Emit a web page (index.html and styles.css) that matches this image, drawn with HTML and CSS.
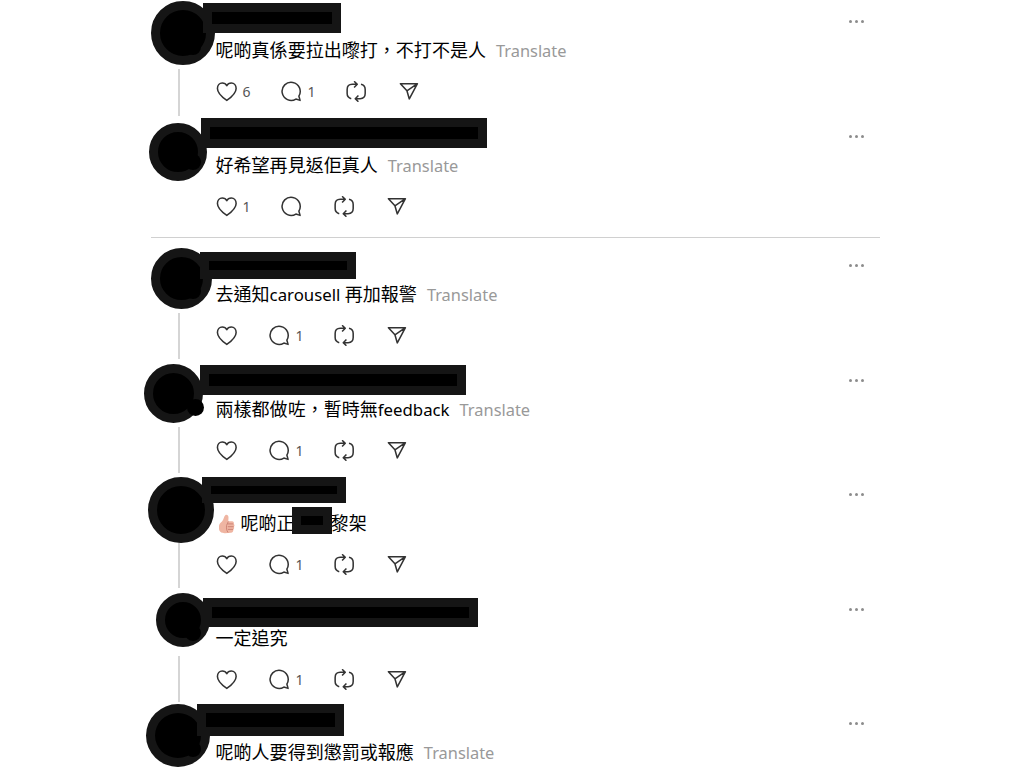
FILE: index.html
```html
<!DOCTYPE html>
<html lang="zh-HK">
<head>
  <meta charset="UTF-8">
  <meta name="viewport" content="width=device-width, initial-scale=1.0">
  <title>Thread</title>
  <link rel="stylesheet" href="styles.css">
</head>
<body>

  <!-- Shared icons -->
  <svg class="sprite" width="0" height="0">
    <symbol id="heart" viewBox="0 0 22 22">
      <path d="M11.300 20.300C8.800 18.500 1.500 13.500 1.500 7.800C1.500 4.300 3.800 2 6.500 2C8.900 2 10.600 3.500 11.300 5C12 3.500 13.700 2 16.100 2C18.800 2 21.100 4.300 21.100 7.800C21.100 13.500 13.800 18.500 11.300 20.300Z"/>
    </symbol>
    <symbol id="comment" viewBox="0 0 22 22">
      <path d="M18.700 15.800A9.500 9.500 0 1 0 15.600 18.900L20 20.300Z"/>
    </symbol>
    <symbol id="repost" viewBox="0 0 22 22">
      <path d="M5.500 18.500C2.700 17.800 1.200 16.300 1.200 13.200V8.800C1.200 5.300 3 3.500 6.500 3.500H11.800M8.500 .3L11.800 3.500L8.500 6.900M15.700 3.500C18.600 4.200 20.100 5.700 20.100 8.800V13.200C20.100 16.700 18.300 18.500 14.800 18.500H9.800M13 15.100L9.700 18.500L13 21.700"/>
    </symbol>
    <symbol id="share" viewBox="0 0 22 22">
      <path d="M1.500 2.800H19.300L10.800 18.800L8.300 10.300ZM8.300 10.300L19.300 2.800"/>
    </symbol>
  </svg>

  <main class="thread">
    <article class="post post-1">
      <div class="rail"><span class="line"></span></div>
      <div class="content">
        <div class="head"><span class="more"><i></i><i></i><i></i></span></div>
        <p class="text">呢啲真係要拉出嚟打，不打不是人<a class="translate">Translate</a></p>
        <div class="actions">
          <span class="action"><svg><use href="#heart"/></svg><b>6</b></span>
          <span class="action"><svg><use href="#comment"/></svg><b>1</b></span>
          <span class="action"><svg><use href="#repost"/></svg></span>
          <span class="action"><svg><use href="#share"/></svg></span>
        </div>
      </div>
      <span class="avatar"></span>
      <span class="badge"></span>
      <span class="name"></span>
    </article>

    <article class="post post-2">
      <div class="rail"></div>
      <div class="content">
        <div class="head"><span class="more"><i></i><i></i><i></i></span></div>
        <p class="text">好希望再見返佢真人<a class="translate">Translate</a></p>
        <div class="actions">
          <span class="action"><svg><use href="#heart"/></svg><b>1</b></span>
          <span class="action"><svg><use href="#comment"/></svg></span>
          <span class="action"><svg><use href="#repost"/></svg></span>
          <span class="action"><svg><use href="#share"/></svg></span>
        </div>
      </div>
      <span class="avatar"></span>
      <span class="badge"></span>
      <span class="name"></span>
    </article>

    <hr class="divider">

    <article class="post post-3">
      <div class="rail"><span class="line"></span></div>
      <div class="content">
        <div class="head"><span class="more"><i></i><i></i><i></i></span></div>
        <p class="text">去通知<span class="latin">carousell </span>再加報警<a class="translate">Translate</a></p>
        <div class="actions">
          <span class="action"><svg><use href="#heart"/></svg></span>
          <span class="action"><svg><use href="#comment"/></svg><b>1</b></span>
          <span class="action"><svg><use href="#repost"/></svg></span>
          <span class="action"><svg><use href="#share"/></svg></span>
        </div>
      </div>
      <span class="avatar"></span>
      <span class="badge"></span>
      <span class="name"></span>
    </article>

    <article class="post post-4">
      <div class="rail"><span class="line"></span></div>
      <div class="content">
        <div class="head"><span class="more"><i></i><i></i><i></i></span></div>
        <p class="text">兩樣都做咗，暫時無<span class="latin">feedback</span><a class="translate">Translate</a></p>
        <div class="actions">
          <span class="action"><svg><use href="#heart"/></svg></span>
          <span class="action"><svg><use href="#comment"/></svg><b>1</b></span>
          <span class="action"><svg><use href="#repost"/></svg></span>
          <span class="action"><svg><use href="#share"/></svg></span>
        </div>
      </div>
      <span class="avatar"></span>
      <span class="badge"></span>
      <span class="name"></span>
    </article>

    <article class="post post-5">
      <div class="rail"><span class="line"></span></div>
      <div class="content">
        <div class="head"><span class="more"><i></i><i></i><i></i></span></div>
        <div class="text">
          <svg class="thumb" viewBox="0 0 20 20">
            <path fill="#efb5a2" d="M8.500 1C10.200 .4 11.500 1.600 11.500 3.500L11.300 7.300H15C16.800 7.300 17.300 9 16.600 9.900C17.800 10.500 17.700 12.200 16.800 12.700C17.500 13.600 17.200 15 16.300 15.400C16.600 17 15.600 18.500 14 18.700L8 19.200C4.500 19.300 2 17.500 2 14.500V12C2 10 3.500 9 5 7.500C7 5.500 6.700 2.500 8.500 1Z"/>
            <path fill="none" stroke="#c97f70" stroke-width=".9" d="M11.300 7.500L10.300 9.900H16.400M10.800 12.700H16.600M11 15.400H16.100M10.200 9.900C9 11 9.200 16.500 11 18.500"/>
          </svg>
          <span>呢啲正</span>
          <span class="cover"></span>
          <span>黎架</span>
        </div>
        <div class="actions">
          <span class="action"><svg><use href="#heart"/></svg></span>
          <span class="action"><svg><use href="#comment"/></svg><b>1</b></span>
          <span class="action"><svg><use href="#repost"/></svg></span>
          <span class="action"><svg><use href="#share"/></svg></span>
        </div>
      </div>
      <span class="avatar"></span>
      <span class="badge"></span>
      <span class="name"></span>
    </article>

    <article class="post post-6">
      <div class="rail"><span class="line"></span></div>
      <div class="content">
        <div class="head"><span class="more"><i></i><i></i><i></i></span></div>
        <p class="text">一定追究</p>
        <div class="actions">
          <span class="action"><svg><use href="#heart"/></svg></span>
          <span class="action"><svg><use href="#comment"/></svg><b>1</b></span>
          <span class="action"><svg><use href="#repost"/></svg></span>
          <span class="action"><svg><use href="#share"/></svg></span>
        </div>
      </div>
      <span class="avatar"></span>
      <span class="badge"></span>
      <span class="name"></span>
    </article>

    <article class="post post-7">
      <div class="rail"></div>
      <div class="content">
        <div class="head"><span class="more"><i></i><i></i><i></i></span></div>
        <p class="text">呢啲人要得到懲罰或報應<a class="translate">Translate</a></p>
      </div>
      <span class="avatar"></span>
      <span class="badge"></span>
      <span class="name"></span>
    </article>
  </main>

</body>
</html>
```
FILE: styles.css
```css
:root {
  --text-color: #000;
  --muted-color: #999;
  --icon-color: #333;
  --line-color: #d5d5d5;
  --cover-color: #151515;
}

* {
  box-sizing: border-box;
}

body {
  margin: 0;
  background-color: #fff;
  color: var(--text-color);
  font-family: "Noto Sans", "Noto Sans CJK TC", sans-serif;
}

.sprite {
  display: block;
}

.thread {
  width: 729px;
  margin-left: 151px;
}

.post {
  position: relative;
  display: flex;
  height: 114.5px;
}

.post-7 {
  height: 65px;
}

.rail {
  width: 64.5px;
  padding: 68.5px 0 0 27px;
}

.line {
  display: block;
  width: 2px;
  height: 46px;
  background-color: var(--line-color);
}

.post-1 .line {
  height: 47px;
}

.content {
  flex: 1;
}

.head {
  display: flex;
  justify-content: flex-end;
  height: 37px;
  padding: 20px 16px 0 0;
}

.more {
  display: flex;
  gap: 3px;
}

.more i {
  width: 3px;
  height: 3px;
  border-radius: 50%;
  background-color: #8c8c8c;
}

.text {
  display: flex;
  align-items: baseline;
  height: 27px;
  margin: 0;
  font-size: 18.05px;
  line-height: 26px;
  white-space: pre;
}

.latin {
  font-size: 16.8px;
}

.translate {
  margin-left: 10px;
  color: var(--muted-color);
  font-size: 16.4px;
}

.actions {
  display: flex;
  align-items: center;
  gap: 32px;
  height: 55px;
}

.action {
  display: flex;
  align-items: center;
}

.action svg {
  width: 21px;
  height: 21px;
  fill: none;
  stroke: var(--icon-color);
  stroke-width: 1.6;
  stroke-linejoin: round;
}

.action b {
  width: 12px;
  padding-left: 6px;
  color: #555;
  font-size: 14px;
  font-weight: normal;
}

.divider {
  height: 1px;
  margin: 8px 0 6px;
  border: 0;
  background-color: #d0d0d0;
}

/* Blacked out avatars and names */
.avatar, .name {
  position: absolute;
  border: 9px solid var(--cover-color);
  background-color: #000;
}

.avatar {
  border-radius: 50%;
}

.badge {
  position: absolute;
  left: 36px;
  top: 40px;
  width: 17px;
  height: 17px;
  border-radius: 50%;
  background-color: #000;
}

.post-1 .avatar { left: 0; top: 1px; width: 64px; height: 64px; }
.post-1 .name { left: 52px; top: 3px; width: 138px; height: 30px; }

.post-2 .avatar { left: -2px; top: 8px; width: 58px; height: 58px; }
.post-2 .name { left: 50px; top: 3px; width: 286px; height: 30px; }

.post-3 .avatar { left: 0; top: 4px; width: 61px; height: 61px; }
.post-3 .name { left: 49px; top: 8px; width: 156px; height: 27px; }

.post-4 .avatar { left: -7px; top: 5.5px; width: 59px; height: 59px; }
.post-4 .name { left: 49px; top: 6.5px; width: 266px; height: 30px; }

.post-5 .avatar { left: -3px; top: 4px; width: 66px; height: 66px; }
.post-5 .name { left: 51px; top: 4px; width: 144px; height: 26px; }

.post-6 .avatar { left: 5px; top: 5.5px; width: 54px; height: 54px; }
.post-6 .name { left: 52px; top: 10.5px; width: 275px; height: 29px; }

.post-7 .avatar { left: -5px; top: 2px; width: 64px; height: 63px; }
.post-7 .name { left: 46px; top: 2px; width: 147px; height: 32px; }

/* Keep the badge inside the circle everywhere but the fourth post */
.post-1 .badge,
.post-2 .badge,
.post-3 .badge,
.post-5 .badge,
.post-6 .badge,
.post-7 .badge {
  left: 34px;
  top: 39px;
  width: 16px;
  height: 16px;
}

.post-6 .badge {
  top: 37px;
}

.post-5 .text {
  align-items: flex-start;
}

.thumb {
  width: 20px;
  height: 20px;
  margin: 4px 4px 0 1px;
}

.cover {
  width: 40px;
  height: 27px;
  margin: -3px -1px 0 -3px;
  border: 9px solid var(--cover-color);
  background-color: #000;
  z-index: 1;
}
```
